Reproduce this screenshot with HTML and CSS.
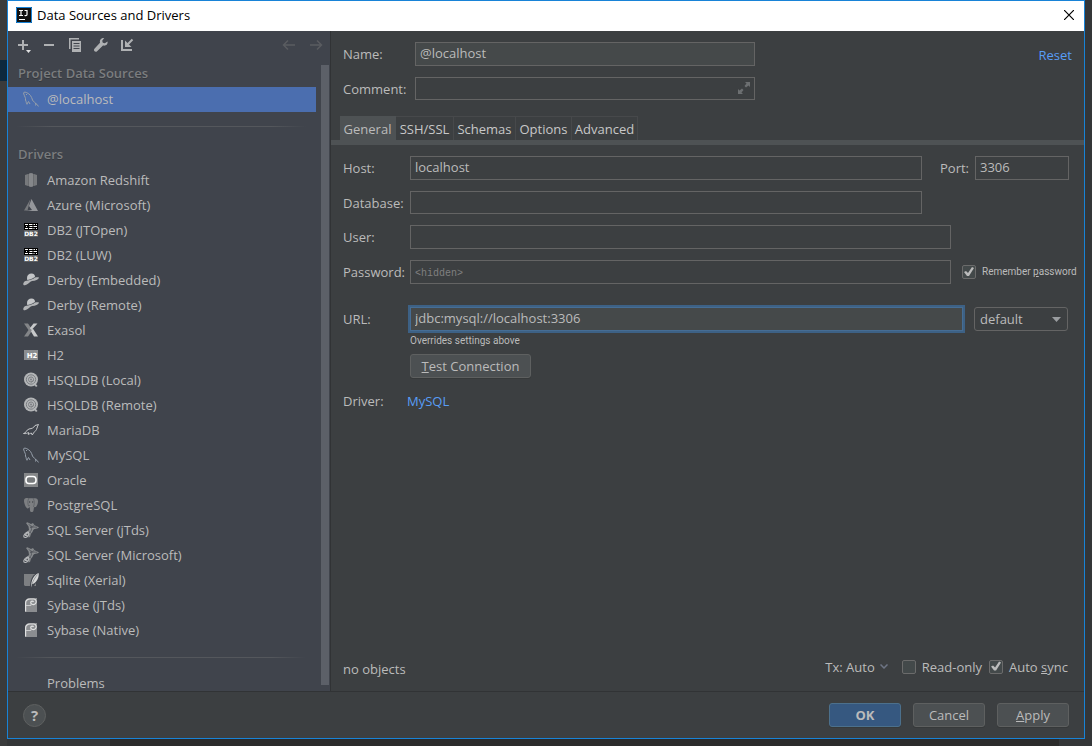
FILE: index.html
```html
<!DOCTYPE html>
<html lang="en">
<head>
<meta charset="utf-8">
<title>Data Sources and Drivers</title>
<link rel="stylesheet" href="styles.css">
</head>
<body>
<svg class="sprite" aria-hidden="true">
  <symbol id="redshift" viewBox="0 0 16 16"><path fill="#77797c" d="M2 3l3-1v12l-3-1zM14 3l-3-1v12l3-1z"/><path fill="#6a6c6f" d="M5 2h1v12H5zM10 2h1v12h-1z"/><path fill="#85878a" d="M6 1.500l2-.5 2 .5v13l-2 .5-2-.5z"/></symbol>
  <symbol id="azure" viewBox="0 0 16 16"><path fill="#77797c" d="M7.500 2L1 13.500h3.500z"/><path fill="#94969a" d="M8.500 2L15 14H3l6-1-3-4z"/></symbol>
  <symbol id="derby" viewBox="0 0 16 16"><path fill="#c4c6c8" d="M4 6C4 3 6 1.500 8.500 1.500S12 3 12 5l-1 .5C9 7 6 8 4.200 8z"/><path fill="#b2b4b6" d="M3.500 8.800C7 8.500 10 7.200 12 5.600c2-.4 3.500-.4 4 .1-.6 1.800-3.500 3.200-7 3.300C7 9.500 4.500 13 2 13.300c-1.500.1-2-.9-1.700-1.800C.7 10 2 9 3.500 8.800z"/></symbol>
  <symbol id="exasol" viewBox="0 0 16 16"><path fill="#838588" d="M1 1.500h4L9.500 8 5 14.500H1L5.500 8z"/><path fill="#c7c9ca" d="M10.500 1.500h4L8.500 8l-1.700-1.700zM9 7.500l1-.8 5 7.800h-4L8 9.500z"/></symbol>
  <symbol id="hsql" viewBox="0 0 16 16"><circle cx="8" cy="7.500" r="7" fill="#b3b5b7"/><circle cx="8" cy="7.500" r="4.700" fill="none" stroke="#7b7e82"/><path d="M10.500 7.500a2.500 2.500 0 1 1-2.500-2.500c1.500 0 2.500 1 2.500 2.500s-1 2.500-2.500 2.500" fill="none" stroke="#7b7e82"/><circle cx="8" cy="7.500" r="1" fill="#7b7e82"/><path d="M10 11.500l3 3.500 1.500-1-2-2.500z" fill="#b3b5b7"/></symbol>
  <symbol id="maria" viewBox="0 0 16 16"><path fill="none" stroke="#c5c7c9" stroke-linejoin="round" d="M.5 11.500C3 11.500 3 8 6 7c3-.6 4.500-.8 6-3.500l3.500-1c-.7 1-1 2-1.500 3.500-.5 2.500-2 3-3.500 5l-1.200 2-1-2c-1.500.7-2 .8-3 1.500l.3-2c-1.500.5-2.500 1.500-5.100 1z"/></symbol>
  <symbol id="mysql" viewBox="0 0 16 16"><path fill="none" stroke="#97a0ab" d="M4 13.500C3 12 3.500 11 2.500 9 3 7 1.500 5.500.8 3 0 1 1.500.8 3.500 1.500 7 3 8.500 5.500 9.500 9c.5 1.500 2 2 3 3l3.200 3.500M4 13l1.500-2.500L7 13M12 12.200l1 .8-.5 1.500"/><path fill="#97a0ab" d="M3 3h1v1H3z"/></symbol>
  <symbol id="oracle" viewBox="0 0 16 16"><path fill="#858789" d="M1 1h14v14H1z"/><rect x="3" y="4.500" width="10" height="7" rx="3" fill="#777a7c" stroke="#fff" stroke-width="1.600"/></symbol>
  <symbol id="postgres" viewBox="0 0 16 16"><path fill="#7d7f82" d="M1 4c0-3 2-3.500 4.500-2.500C7 1 9 1 10.500 1.600 13 .8 15 1.500 15 4.500c0 2-1 4-2 5.500l-2 .3-.5 3.200c-.3 2-3.300 2-3.500 0L6.700 10 5 11.500C3 12 1 6 1 4z"/><path fill="none" stroke="#5b5e63" stroke-width=".8" d="M5.500 2C4.500 4 4.800 7 5.500 9l1.400-.5M10.500 2c1 2 1 5 0 8"/><path fill="#33363b" d="M6 4.500h1.200v1H6zM9 4.500h1.200v1H9z"/></symbol>
  <symbol id="mssql" viewBox="0 0 16 16"><path fill="#85888b" d="M3 1l1.500-.7L8 2l2-1 1.500 2.300 4.500 2c-.5 1.200-3 1.400-5 2-1.500 1-1 3.200-3 4.400L7 15l-1.500.5L5 13l-1.500-3L6 8 5.500 4.500z"/><path fill="none" stroke="#41454d" stroke-width=".6" d="M5.500 2.200L9 5l2-1.500M7 5.500l4-.5 3 .3M8 3.500L8.500 8 6 11l2-.5"/><path fill="none" stroke="#b5b7b9" stroke-width="1.100" d="M1 15c-1-2 2-5 4-5 2.200.6-.2 5.500-2.700 5.500zM2.300 14c0-2 1.500-2.500 2.700-3.500M1.200 12l3 2"/></symbol>
  <symbol id="sqlite" viewBox="0 0 16 16"><path fill="#7d7f82" d="M1 2h12v12H2l-1-1z"/><path fill="#41454d" d="M7 15C7 9 9 3 14 1h2v5l-5 8z"/><path fill="#d7d8d9" d="M8 15.500C8 9 10.500 3 15.500 1c1 3-1 8-4.500 10.500-1 .5-1.700.5-2 .5z"/><path fill="none" stroke="#7d7f82" stroke-width=".7" d="M8.800 12.500C10 9 12 5.500 14.500 2.500"/></symbol>
  <symbol id="sybase" viewBox="0 0 16 16"><path fill="#8b8d90" d="M2 6c0-3 2-5 5-5h7v14H2z"/><path fill="none" stroke="#e1e2e2" stroke-width="1.200" d="M2.600 14.500V6c0-2.500 2-4 4.500-4H11c2.500.3 3 3.500 1 5-2 1.300-4.500 0-4.300-1.700C8 3.800 10 3.700 10.500 5"/><path fill="none" stroke="#c9cacb" d="M3 8.500h5V6.500"/></symbol>
</svg>

<main class="dialog">
  <header class="titlebar">
    <svg class="app-icon" viewBox="0 0 16 16" aria-hidden="true"><path fill="#111" d="M0 0h16v16H0z"/><path fill="none" stroke="#1883d7" d="M.5.500h15v15H.5z"/><path fill="none" stroke="#fff" stroke-width="1.200" d="M3 3.500h4M5 3.500v5M3 8.500h4M8.500 3.500H11v4c0 1-1 1.200-2.500 1"/><path fill="#fff" d="M3 12h6v1H3z"/></svg>
    <h1 class="title">Data Sources and Drivers</h1>
    <button class="close" aria-label="Close"><svg viewBox="0 0 10 10" width="10" height="10"><path d="M0 0l10 10M10 0L0 10" stroke="#000" stroke-width="1.200"/></svg></button>
  </header>

  <div class="content">
    <aside class="sidebar">
      <div class="toolbar">
        <button class="tool" aria-label="Add"><svg viewBox="0 0 16 16"><path fill="none" stroke="#afb1b3" stroke-width="2" d="M3 8h10M8 3v10"/><path fill="#e0e1e2" d="M11 13h5l-2.500 3z"/></svg></button>
        <button class="tool" aria-label="Remove"><svg viewBox="0 0 16 16"><path fill="#afb1b3" d="M3 7h10v2H3z"/></svg></button>
        <button class="tool" aria-label="Duplicate"><svg viewBox="0 0 16 16"><path fill="#afb1b3" d="M2 1h10v1.500H3.500V12H2z"/><path fill="#afb1b3" d="M5 4h9v11H5z"/><path stroke="#41454d" d="M6.500 6.500h6M6.500 9h6M6.500 11.500h6"/></svg></button>
        <button class="tool" aria-label="Properties"><svg viewBox="0 0 16 16"><path fill="#afb1b3" d="M14.500 4.500l-2.700 1.800-2-.5-.6-2 2-2.700C8.500.6 6.300 3 7 5.700L1.200 12c-.8 1.700 1 3.300 2.600 2.500L10 8.500c2.800.8 5.200-1.500 4.500-4z"/></svg></button>
        <button class="tool" aria-label="Make global"><svg viewBox="0 0 16 16"><path fill="none" stroke="#afb1b3" stroke-width="2" d="M3 3v10h10M13.500 2.500L8.500 7.500"/><path fill="#afb1b3" d="M6 3.500V10h6.500z"/></svg></button>
        <span class="spacer"></span>
        <button class="tool nav" aria-label="Back" disabled><svg viewBox="0 0 16 16"><path fill="none" stroke="#595c60" stroke-width="1.500" d="M14 8H3M7 3.500L2.500 8 7 12.500"/></svg></button>
        <button class="tool nav" aria-label="Forward" disabled><svg viewBox="0 0 16 16"><path fill="none" stroke="#595c60" stroke-width="1.500" d="M2 8h11M9 3.500L13.500 8 9 12.500"/></svg></button>
      </div>
      <div class="scroll">
        <div class="list">
          <h2 class="group">Project Data Sources</h2>
          <a href="#" class="item selected"><svg class="icon"><use href="#mysql"/></svg>@localhost</a>
          <hr class="rule">
          <h2 class="group">Drivers</h2>
          <a href="#" class="item"><svg class="icon"><use href="#redshift"/></svg>Amazon Redshift</a>
          <a href="#" class="item"><svg class="icon"><use href="#azure"/></svg>Azure (Microsoft)</a>
          <a href="#" class="item"><svg class="icon" viewBox="0 0 16 16"><path fill="#000" d="M1 1h14v7H1z"/><path fill="none" stroke="#fff" d="M2 2.500h3M6 2.500h3.500M10.500 2.500h1.500M13 2.500h1M3 4.500h1M6.500 4.500h3M10.500 4.500h3.500M2 6.500h3M6 6.500h3.500M10.500 6.500h1M13 6.500h1"/><path fill="#5d5f62" d="M1 8h14v7H1z"/><text x="8" y="14" class="glyph">DB2</text></svg>DB2 (JTOpen)</a>
          <a href="#" class="item"><svg class="icon" viewBox="0 0 16 16"><path fill="#000" d="M1 1h14v7H1z"/><path fill="none" stroke="#fff" d="M2 2.500h3M6 2.500h3.500M10.500 2.500h1.500M13 2.500h1M3 4.500h1M6.500 4.500h3M10.500 4.500h3.500M2 6.500h3M6 6.500h3.500M10.500 6.500h1M13 6.500h1"/><path fill="#5d5f62" d="M1 8h14v7H1z"/><text x="8" y="14" class="glyph">DB2</text></svg>DB2 (LUW)</a>
          <a href="#" class="item"><svg class="icon"><use href="#derby"/></svg>Derby (Embedded)</a>
          <a href="#" class="item"><svg class="icon"><use href="#derby"/></svg>Derby (Remote)</a>
          <a href="#" class="item"><svg class="icon"><use href="#exasol"/></svg>Exasol</a>
          <a href="#" class="item"><svg class="icon" viewBox="0 0 16 16"><path fill="#8b8d90" d="M1 3h14v10H1z"/><text x="9" y="11" class="glyph h2">H2</text></svg>H2</a>
          <a href="#" class="item"><svg class="icon"><use href="#hsql"/></svg>HSQLDB (Local)</a>
          <a href="#" class="item"><svg class="icon"><use href="#hsql"/></svg>HSQLDB (Remote)</a>
          <a href="#" class="item"><svg class="icon"><use href="#maria"/></svg>MariaDB</a>
          <a href="#" class="item"><svg class="icon"><use href="#mysql"/></svg>MySQL</a>
          <a href="#" class="item"><svg class="icon"><use href="#oracle"/></svg>Oracle</a>
          <a href="#" class="item"><svg class="icon"><use href="#postgres"/></svg>PostgreSQL</a>
          <a href="#" class="item"><svg class="icon"><use href="#mssql"/></svg>SQL Server (jTds)</a>
          <a href="#" class="item"><svg class="icon"><use href="#mssql"/></svg>SQL Server (Microsoft)</a>
          <a href="#" class="item"><svg class="icon"><use href="#sqlite"/></svg>Sqlite (Xerial)</a>
          <a href="#" class="item"><svg class="icon"><use href="#sybase"/></svg>Sybase (jTds)</a>
          <a href="#" class="item"><svg class="icon"><use href="#sybase"/></svg>Sybase (Native)</a>
          <hr class="rule">
          <a href="#" class="item problems">Problems</a>
        </div>
        <div class="scrollbar"></div>
      </div>
    </aside>

    <section class="panel">
      <div class="head">
        <div class="head-fields">
          <div class="head-row"><label for="name">Name:</label><input id="name" class="field filled" value="@localhost"></div>
          <div class="head-row"><label for="comment">Comment:</label>
            <span class="expandable"><input id="comment" class="field short">
              <button class="expand" aria-label="Expand"><svg viewBox="0 0 12 12" width="12" height="12"><path fill="#6c6f71" d="M7 0h5v5l-1.500-1.500L8 5.500 6.500 4l2-2.500zM0 7l1.500 1.500L4 6.500 5.500 8l-2 2.500L5 12H0z"/></svg></button></span></div>
        </div>
        <a href="#" class="link">Reset</a>
      </div>

      <nav class="tabs">
        <button class="tab active">General</button><button class="tab">SSH/SSL</button><button class="tab">Schemas</button><button class="tab">Options</button><button class="tab">Advanced</button>
      </nav>

      <form class="form">
        <div class="row"><label for="host">Host:</label><input id="host" class="field" value="localhost">
          <div class="side wide"><label class="port-label" for="port">Port:</label><input id="port" class="field" value="3306"></div></div>
        <div class="row"><label for="db">Database:</label><input id="db" class="field short"><div class="side wide"></div></div>
        <div class="row"><label for="user">User:</label><input id="user" class="field"><div class="side medium"></div></div>
        <div class="row"><label for="pw">Password:</label><input id="pw" type="password" class="field" placeholder="&lt;hidden&gt;">
          <div class="side medium"><label class="check small"><input type="checkbox" checked><span>Remember <u>p</u>assword</span></label></div></div>
        <div class="row url-row"><label for="url">URL:</label><input id="url" class="field filled focused" value="jdbc:mysql://localhost:3306">
          <div class="side narrow"><span class="combo"><select class="select" aria-label="URL type"><option>default</option></select><svg class="arrow" viewBox="0 0 9 5"><path fill="#9a9da0" d="M0 0h9L4.500 5z"/></svg></span></div></div>
        <div class="under">
          <p class="hint small">Overrides settings above</p>
          <button type="button" class="btn test"><span><u>T</u>est Connection</span></button>
        </div>
        <div class="driver"><span>Driver:</span><a href="#" class="link">MySQL</a></div>
      </form>

      <div class="status">
        <span class="objects">no objects</span>
        <span class="spacer"></span>
        <button class="tx">Tx: Auto <svg viewBox="0 0 8 5" width="8" height="5"><path d="M.5.500L4 4 7.500.500" fill="none" stroke="#6e7585" stroke-width="1.500"/></svg></button>
        <label class="check"><input type="checkbox"><span>Read-only</span></label>
        <label class="check sync"><input type="checkbox" checked><span>Auto <u>s</u>ync</span></label>
      </div>
    </section>
  </div>

  <footer class="footer">
    <button class="help" aria-label="Help">?</button>
    <span class="spacer"></span>
    <button class="btn primary">OK</button>
    <button class="btn">Cancel</button>
    <button class="btn"><span><u>A</u>pply</span></button>
  </footer>
</main>
</body>
</html>
```
FILE: styles.css
```css
* { box-sizing: border-box; }

body {
  margin: 0;
  height: 100vh;
  padding: 0 7px 7px;
  background:
    linear-gradient(#0d293e, #0d293e) 0 60px / 7px 21px no-repeat,
    linear-gradient(#3a3b3c, #3a3b3c) 0 0 / 7px 100% no-repeat,
    linear-gradient(#343638, #343638) 0 100% / 110px 7px no-repeat,
    linear-gradient(#343638, #343638) 100% 0 / 33px 100% no-repeat,
    #2b2b2b;
  color: #bbbbbb;
  font-family: "Open Sans", "Noto Sans", sans-serif;
  font-size: 13px;
  line-height: 18px;
  overflow: hidden;
}

button, input, select { font: inherit; color: inherit; margin: 0; }
button { background: none; border: 0; padding: 0; }
svg { display: block; flex: none; }
.sprite { position: absolute; width: 0; height: 0; }
.spacer { flex: 1; }
.glyph { font: bold 6px "DejaVu Sans", sans-serif; fill: #fff; text-anchor: middle; }
.glyph.h2 { font-size: 7px; }

.dialog {
  height: 100%;
  display: flex;
  flex-direction: column;
  border: 1px solid #1883d7;
  background: #3c3f41;
}

.titlebar {
  height: 30px;
  flex: none;
  display: flex;
  align-items: center;
  gap: 5px;
  padding: 0 10px 2px 8px;
  background: #fff;
}
.app-icon { width: 16px; height: 16px; }
.title { flex: 1; margin: 0; font-size: 13px; font-weight: 400; color: #000; }

.content { flex: 1; min-height: 0; display: flex; }

.sidebar {
  width: 323px;
  flex: none;
  display: flex;
  flex-direction: column;
  background: #40444c;
  border-right: 1px solid #313335;
}
.toolbar { height: 28px; flex: none; display: flex; align-items: center; gap: 10px; padding: 0 6px 0 7px; }
.tool svg { width: 16px; height: 16px; }
.nav + .nav { margin-left: 1px; }
.scroll { flex: 1; min-height: 0; display: flex; gap: 5px; padding-right: 1px; }
.list { flex: 1; overflow: hidden; }
.scrollbar { width: 8px; margin: 6px 0; background: #5c6068; }
.group { height: 28px; margin: 0; padding-left: 10px; font-size: 13px; font-weight: 600; line-height: 28px; color: #7b7d7f; text-shadow: 0 1px #35383d; }
.item { height: 25px; display: flex; align-items: center; gap: 8px; padding: 0 0 1px 15px; color: inherit; text-decoration: none; }
.item.selected { background: #4b6eaf; }
.item.problems { padding-left: 39px; }
.icon { width: 16px; height: 16px; }
.rule { height: 28px; margin: 0 10px 0 8px; border: 0; background: linear-gradient(90deg, transparent, #54575c 12%, #54575c 88%, transparent) 0 14px / 100% 1px no-repeat; }

.panel { flex: 1; min-width: 0; display: flex; flex-direction: column; }

.head { display: flex; justify-content: space-between; padding: 11px 12px 16px; }
.head-fields { display: grid; gap: 11px; }
.head-row { display: grid; grid-template-columns: 72px 340px; align-items: center; }
.head > .link { margin-top: 4px; }
.expandable { position: relative; display: flex; }
.expand { position: absolute; right: 5px; top: 5px; }

.link { color: #589df6; text-decoration: none; }

.field {
  width: 100%;
  min-width: 0;
  height: 24px;
  padding: 0 4px 2px;
  border: 1px solid #646464;
  border-radius: 0;
  background: #3c3f41;
  outline: 0;
}
.short { height: 23px; }
.filled { background: #45494a; }
.focused { border-color: #466d94; outline: 2px solid #3d6185; }
.field::placeholder { font: 10px "Liberation Mono", monospace; color: #808080; }

.tabs {
  display: grid;
  grid-template-columns: 56px 58px 62px 56px 66px;
  padding-left: 9px;
  border-bottom: 5px solid #4e5254;
}
.tab { height: 24px; border: 1px solid #47494b; border-left: 0; border-bottom: 0; color: #c8c8c8; }
.tab.active { background: #4e5254; border-color: #4e5254; color: #bbbbbb; }

.form { flex: 1; display: flex; flex-direction: column; gap: 11px; padding: 11px 12px 0; }
.row { display: grid; grid-template-columns: 67px 1fr auto; align-items: center; }
.url-row { margin-top: 12px; }
.side { display: flex; align-items: center; }
.wide { width: 150px; padding: 0 3px 0 18px; }
.port-label { width: 35px; flex: none; }
.medium { width: 121px; padding-left: 11px; }
.narrow { width: 109px; padding: 0 4px 0 11px; }

.combo { position: relative; width: 100%; }
.select { display: block; width: 100%; height: 24px; padding: 0 5px; appearance: none; background: #3c3f41; border: 1px solid #646464; border-radius: 3px; }
.arrow { position: absolute; right: 7px; top: 10px; width: 9px; height: 5px; pointer-events: none; }

.check { display: flex; align-items: center; gap: 6px; white-space: nowrap; }
.small { font-family: Roboto, sans-serif; font-size: 10px; }
.check input { appearance: none; width: 14px; height: 14px; flex: none; border: 1px solid #6b6b6b; border-radius: 2px; background: #43494a; }
.check input:checked::before {
  content: "";
  display: block;
  width: 12px;
  height: 12px;
  background: #bbbbbb;
  clip-path: polygon(9px 1px, 11px 2px, 6px 10px, 4px 10px, 1px 6px, 3px 5px, 5px 7px);
}

.under { padding-left: 67px; margin-top: -10px; display: grid; justify-items: start; gap: 4px; }
.hint { margin: 0; }
.btn {
  width: 72px;
  height: 24px;
  border: 1px solid #5e6060;
  border-radius: 3px;
  background: #4c5052;
  box-shadow: 0 1px #36393a;
}
.test { width: 121px; }
.primary { background: #365880; border-color: #4c708c; font-weight: 700; }
.driver { display: grid; grid-template-columns: 64px 1fr; margin-top: 3px; }

.status { display: flex; align-items: center; padding: 0 16px 13px 12px; }
.objects { padding-top: 5px; }
.tx { display: flex; align-items: center; gap: 5px; margin-right: 14px; }
.sync { margin-left: 7px; }

.footer { height: 47px; flex: none; display: flex; align-items: center; gap: 12px; padding: 0 15px; border-top: 1px solid #313335; }
.help { width: 23px; height: 23px; border: 1px solid #5e6060; border-radius: 50%; background: #4c5052; font-size: 15px; font-weight: 700; line-height: 20px; }
```
